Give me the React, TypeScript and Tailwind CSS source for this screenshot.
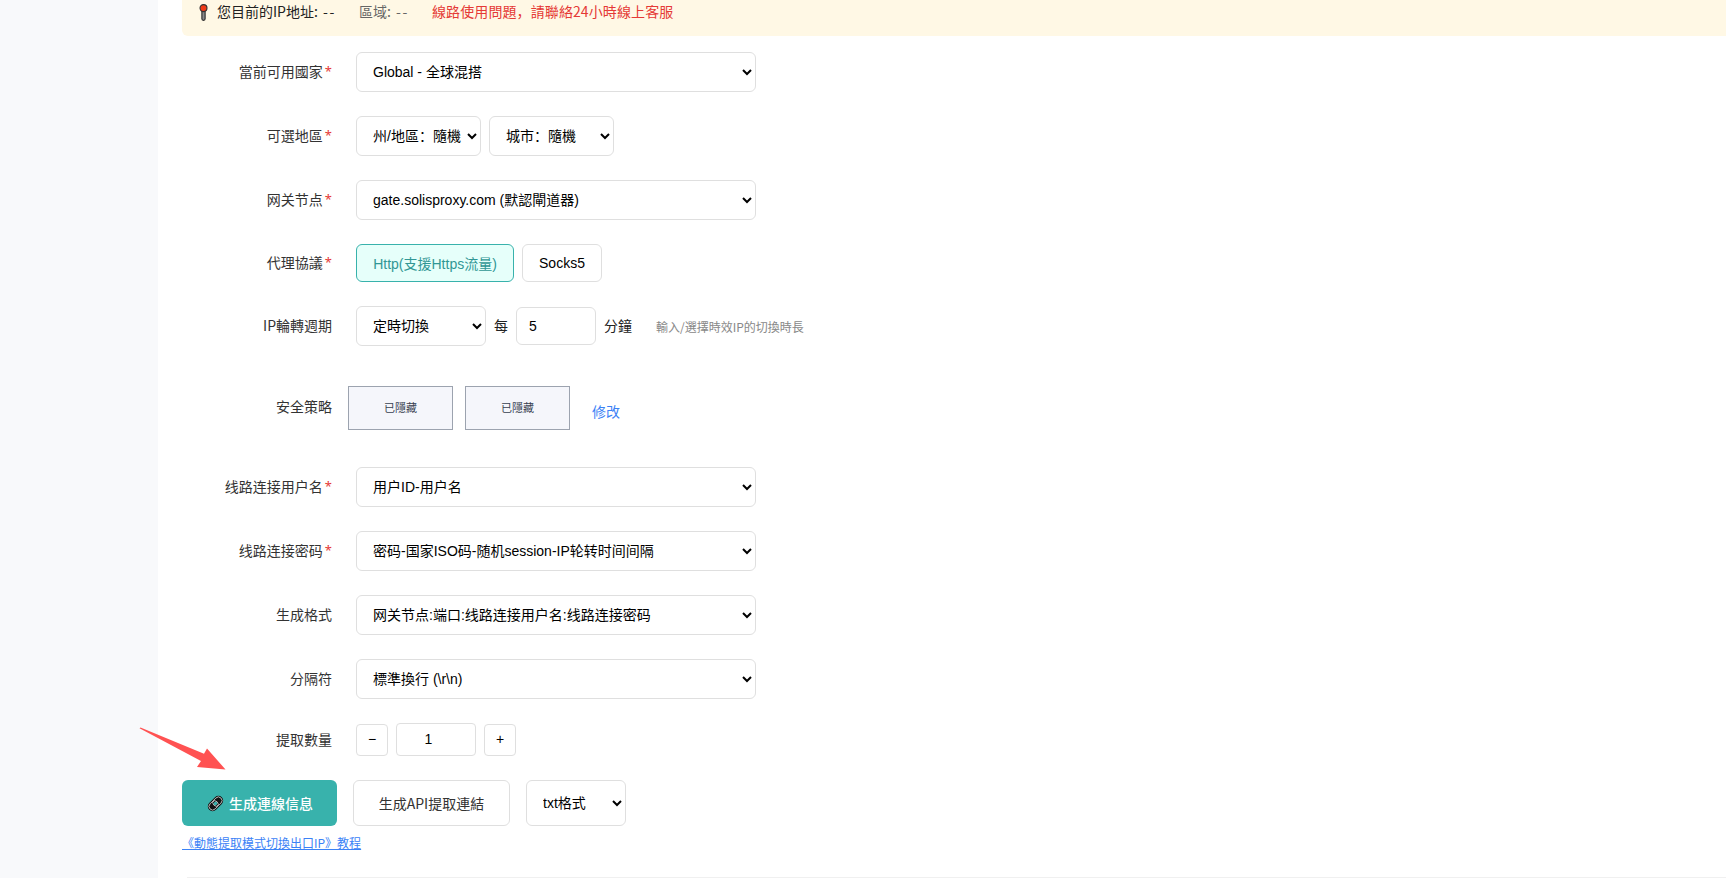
import type { ReactNode } from 'react'
import { clsx } from 'clsx'

const selectClass =
  'h-10 rounded-md border border-[#dfdfdf] bg-white pl-3 pr-0 font-["Liberation_Sans","Noto_Sans_CJK_SC",sans-serif] text-sm text-black'

interface SelectBoxProps {
  label: string
  value: string
  className?: string
}

function SelectBox({ label, value, className }: SelectBoxProps) {
  return (
    <select aria-label={label} defaultValue={value} className={clsx(selectClass, className)}>
      <option value={value}>{value}</option>
    </select>
  )
}

interface FieldRowProps {
  label: string
  required?: boolean
  className?: string
  labelClassName?: string
  children: ReactNode
}

function FieldRow({ label, required, className, labelClassName = 'pb-0.5', children }: FieldRowProps) {
  return (
    <div className={clsx('flex items-center', className)}>
      <div className={clsx('mr-6 flex w-[150px] shrink-0 justify-end text-sm text-[#333]', labelClassName)}>
        {label}
        {required && <span className='ml-0.5 pt-px font-["Noto_Sans",sans-serif] text-[13px] text-[#e53935]'>*</span>}
      </div>
      {children}
    </div>
  )
}

function PinIcon() {
  return (
    <svg width="9" height="17" viewBox="0 0 9 17" className="shrink-0">
      <rect x="2.9" y="6" width="3.2" height="10.3" rx="1.5" fill="#8a8a8a" stroke="#333" strokeWidth="1.2" />
      <circle cx="4.5" cy="4.1" r="3.5" fill="#f03a17" stroke="#333" strokeWidth="1.1" />
    </svg>
  )
}

function LinkIcon() {
  return (
    <svg width="17" height="17" viewBox="0 0 17 17" fill="none" className="shrink-0">
      <g transform="rotate(-45 8.5 8.5)">
        <rect x="-0.4" y="3.7" width="17.8" height="9.6" rx="4.8" fill="#111" />
        <rect x="0.8" y="4.9" width="10" height="7.2" rx="3.6" stroke="#c4c4c4" strokeWidth="0.9" />
        <rect x="6.2" y="4.9" width="10" height="7.2" rx="3.6" stroke="#c4c4c4" strokeWidth="0.9" />
        <rect x="6.7" y="6.8" width="3.6" height="3.4" rx="1.7" fill="#38b2ac" />
      </g>
    </svg>
  )
}

const inputFont = 'font-["Liberation_Sans","Noto_Sans_CJK_SC",sans-serif]'

export default function App() {
  return (
    <div className='relative flex h-[878px] w-full overflow-hidden bg-[#f8f9fb] font-["Noto_Sans_CJK_SC",sans-serif]'>
      <aside className="w-[158px] shrink-0" />

      <main className="flex-1 bg-white pl-6">
        <div className="flex h-9 items-start rounded-bl-md bg-[#fff8e5] pl-[17px] text-sm text-[#333]">
          <div className="flex h-6 items-center">
            <PinIcon />
            <div className="flex pb-0.5 pl-[9px]">
              <span className="w-[142px] text-[#222]">
                您目前的IP地址: <span className="ml-0.5 tracking-[1.6px]">--</span>
              </span>
              <span className="w-[73px] text-[#666]">
                區域: <span className="ml-0.5 tracking-[1.6px]">--</span>
              </span>
              <span className="tracking-[0.1px] text-[#e53935]">線路使用問題，請聯絡24小時線上客服</span>
            </div>
          </div>
        </div>

        <form className="pt-4" onSubmit={(e) => e.preventDefault()}>
          <FieldRow label="當前可用國家" required className="mb-6 h-10">
            <SelectBox label="當前可用國家" value="Global - 全球混搭" className="w-[400px]" />
          </FieldRow>

          <FieldRow label="可選地區" required className="mb-6 h-10">
            <div className="flex gap-2">
              <SelectBox label="州/地區" value="州/地區：隨機" className="w-[125px]" />
              <SelectBox label="城市" value="城市：隨機" className="w-[125px]" />
            </div>
          </FieldRow>

          <FieldRow label="网关节点" required className="mb-6 h-10">
            <SelectBox label="网关节点" value="gate.solisproxy.com (默認閘道器)" className="w-[400px]" />
          </FieldRow>

          <FieldRow label="代理協議" required className="mb-6 h-[38px]">
            <div className="flex gap-2">
              <button
                type="button"
                className={clsx(inputFont, 'h-[38px] w-[158px] rounded-md border border-[#38b2ac] bg-[#e6fffa] pt-0.5 text-sm text-[#319795]')}
              >
                Http(支援Https流量)
              </button>
              <button
                type="button"
                className={clsx(inputFont, 'h-[38px] w-20 rounded-md border border-[#dfdfdf] bg-white text-sm text-black')}
              >
                Socks5
              </button>
            </div>
          </FieldRow>

          <FieldRow label="IP輪轉週期" className="mb-10 h-10">
            <div className="flex items-center gap-2 text-sm text-[#222]">
              <SelectBox label="IP輪轉週期" value="定時切換" className="w-[130px]" />
              <span className="pb-0.5">每</span>
              <input
                aria-label="分鐘"
                defaultValue="5"
                className={clsx(inputFont, 'h-[38px] w-20 rounded-md border border-[#dfdfdf] px-3 text-sm text-black')}
              />
              <span className="pb-0.5">分鐘</span>
              <span className="ml-4 pt-0.5 text-xs text-[#888]">輸入/選擇時效IP的切換時長</span>
            </div>
          </FieldRow>

          <FieldRow label="安全策略" className="mb-[37px] h-11" labelClassName="pb-1">
            <div className="-ml-2 flex items-center text-[11px] text-[#374151]">
              <span className="flex h-11 w-[105px] items-center justify-center border border-[#9ca3af] bg-[#f5f6fb] pb-0.5">已隱藏</span>
              <span className="ml-3 flex h-11 w-[105px] items-center justify-center border border-[#9ca3af] bg-[#f5f6fb] pb-0.5">已隱藏</span>
              <a className="ml-[22px] pt-1.5 text-sm text-[#3b82f6]">修改</a>
            </div>
          </FieldRow>

          <FieldRow label="线路连接用户名" required className="mb-6 h-10">
            <SelectBox label="线路连接用户名" value="用户ID-用户名" className="w-[400px]" />
          </FieldRow>

          <FieldRow label="线路连接密码" required className="mb-6 h-10">
            <SelectBox label="线路连接密码" value="密码-国家ISO码-随机session-IP轮转时间间隔" className="w-[400px]" />
          </FieldRow>

          <FieldRow label="生成格式" className="mb-6 h-10">
            <SelectBox label="生成格式" value="网关节点:端口:线路连接用户名:线路连接密码" className="w-[400px]" />
          </FieldRow>

          <FieldRow label="分隔符" className="mb-6 h-10">
            <SelectBox label="分隔符" value="標準換行 (\r\n)" className="w-[400px]" />
          </FieldRow>

          <FieldRow label="提取數量" className="mb-6 h-[33px]">
            <div className={clsx(inputFont, 'flex items-end gap-2 text-sm text-black')}>
              <button type="button" className="size-8 rounded border border-[#dfdfdf] bg-white pb-0.5">−</button>
              <input
                aria-label="提取數量"
                defaultValue="1"
                className="h-[33px] w-20 rounded border border-[#dfdfdf] pb-0.5 pr-[15px] text-center"
              />
              <button type="button" className="size-8 rounded border border-[#dfdfdf] bg-white pb-0.5">+</button>
            </div>
          </FieldRow>

          <div className="flex gap-4 text-sm">
            <button
              type="button"
              className="flex h-[46px] w-[155px] items-center justify-center gap-[5px] rounded-md bg-[#38b2ac] pl-px font-medium text-white"
            >
              <LinkIcon />
              生成連線信息
            </button>
            <button type="button" className="h-[46px] w-[157px] rounded-md border border-[#dfdfdf] bg-white text-[#333]">
              生成API提取連結
            </button>
            <SelectBox label="格式" value="txt格式" className="h-[46px] w-[100px]" />
          </div>
        </form>

        <a className="mt-[9px] block w-fit text-xs text-[#3b82f6] underline">《動態提取模式切換出口IP》教程</a>

        <div className="ml-[5px] mt-[26px] h-px bg-[#f0f0f0]" />
      </main>

      {/* arrow marking the generate button */}
      <svg className="absolute left-[139px] top-[726px]" width="88" height="46" viewBox="0 0 88 46">
        <path d="M0.5 2.3L1.5 1.5L65 27.8L68 22.5L86.5 43.5L58 41L62 35Z" fill="#ff5252" />
      </svg>
    </div>
  )
}
